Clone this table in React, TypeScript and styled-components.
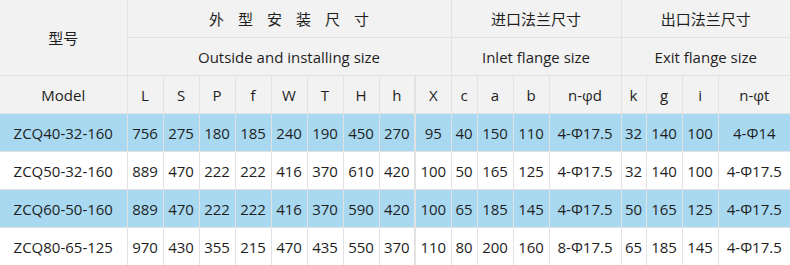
import styled, { createGlobalStyle } from 'styled-components';

const GlobalStyle = createGlobalStyle`
  body {
    margin: 0;
    background: #ffffff;
    font-family: "Open Sans", "Noto Sans CJK SC", sans-serif;
  }
`;

const Table = styled.table`
  width: 790px;
  table-layout: fixed;
  border-collapse: collapse;
  border-style: hidden;
  font-size: 15px;
  color: #1e1e1e;
`;

const HeadCell = styled.th<{ $wide?: boolean }>`
  height: 37px;
  padding: 0;
  font-weight: normal;
  text-align: center;
  background: #f2f2f2;
  border: 1px solid #e2e2e2;
  border-right-width: ${({ $wide }) => ($wide ? '2px' : '1px')};
  white-space: nowrap;
`;

const Spaced = styled.span`
  font-family: "Noto Sans CJK SC", sans-serif;
  letter-spacing: 14px;
  padding-left: 14px;
`;

const Row = styled.tr<{ $hl?: boolean }>`
  background: ${({ $hl }) => ($hl ? '#a9d9f1' : '#ffffff')};
`;

const Cell = styled.td<{ $wide?: boolean }>`
  height: 37px;
  padding: 0;
  text-align: center;
  white-space: nowrap;
  border: 1px solid #e2e2e2;
  border-right-width: ${({ $wide }) => ($wide ? '2px' : '1px')};
`;

const widths = [127, 36, 36, 36, 36, 36, 36, 36, 36, 36, 26, 36, 36, 72, 25, 36, 36, 72];

const columns = ['L', 'S', 'P', 'f', 'W', 'T', 'H', 'h', 'X', 'c', 'a', 'b', 'n-φd', 'k', 'g', 'i', 'n-φt'];

const rows = [
  ['ZCQ40-32-160', '756', '275', '180', '185', '240', '190', '450', '270', '95', '40', '150', '110', '4-Φ17.5', '32', '140', '100', '4-Φ14'],
  ['ZCQ50-32-160', '889', '470', '222', '222', '416', '370', '610', '420', '100', '50', '165', '125', '4-Φ17.5', '32', '140', '100', '4-Φ17.5'],
  ['ZCQ60-50-160', '889', '470', '222', '222', '416', '370', '590', '420', '100', '65', '185', '145', '4-Φ17.5', '50', '165', '125', '4-Φ17.5'],
  ['ZCQ80-65-125', '970', '430', '355', '215', '470', '435', '550', '370', '110', '80', '200', '160', '8-Φ17.5', '65', '185', '145', '4-Φ17.5'],
];

// the h column carries a heavier right rule
const WIDE_COL = 8;

const App = () => {
  return (
    <>
      <GlobalStyle />
      <Table>
        <colgroup>
          {widths.map((w, i) => (
            <col key={i} style={{ width: w }} />
          ))}
        </colgroup>
        <thead>
          <tr>
            <HeadCell rowSpan={2}>型号</HeadCell>
            <HeadCell colSpan={9}>
              <Spaced>外型安装尺寸</Spaced>
            </HeadCell>
            <HeadCell colSpan={4}>进口法兰尺寸</HeadCell>
            <HeadCell colSpan={4}>出口法兰尺寸</HeadCell>
          </tr>
          <tr>
            <HeadCell colSpan={9}>Outside and installing size</HeadCell>
            <HeadCell colSpan={4}>Inlet flange size</HeadCell>
            <HeadCell colSpan={4}>Exit flange size</HeadCell>
          </tr>
          <tr>
            <HeadCell>Model</HeadCell>
            {columns.map((c, i) => (
              <HeadCell key={c} $wide={i + 1 === WIDE_COL}>
                {c}
              </HeadCell>
            ))}
          </tr>
        </thead>
        <tbody>
          {rows.map((r, ri) => (
            <Row key={r[0]} $hl={ri % 2 === 0}>
              {r.map((v, ci) => (
                <Cell key={ci} $wide={ci === WIDE_COL}>
                  {v}
                </Cell>
              ))}
            </Row>
          ))}
        </tbody>
      </Table>
    </>
  );
};

export default App;
